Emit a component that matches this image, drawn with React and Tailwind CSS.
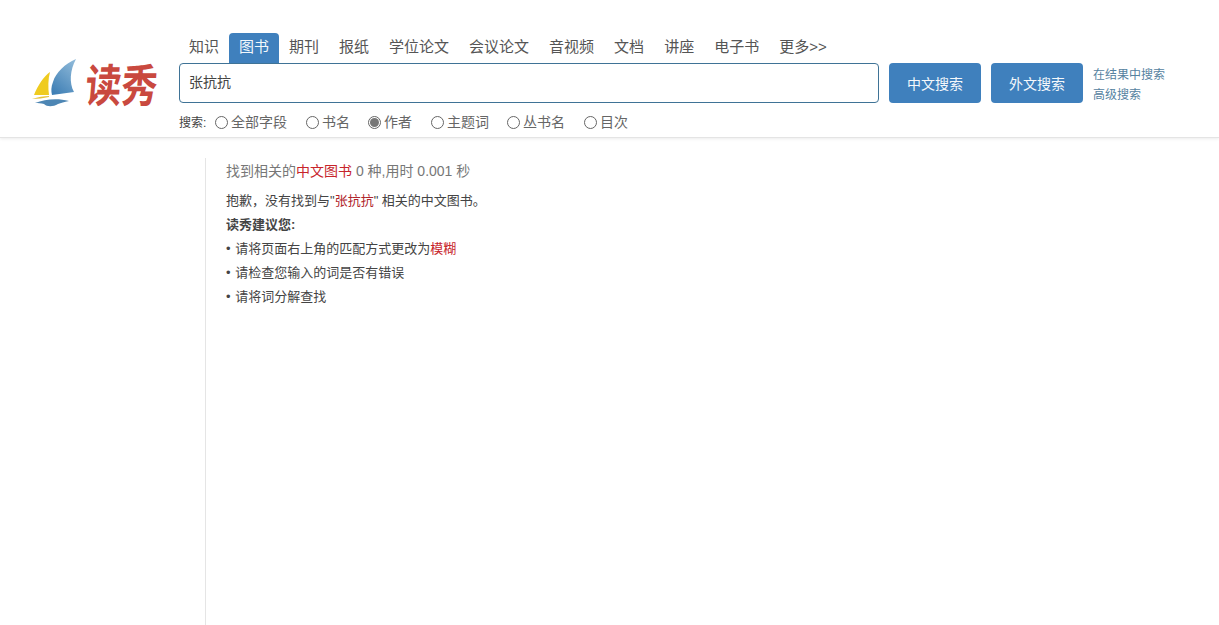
const FONT = { fontFamily: '"Liberation Sans", "Noto Sans CJK SC", sans-serif' };

const tabs = ["知识", "图书", "期刊", "报纸", "学位论文", "会议论文", "音视频", "文档", "讲座", "电子书", "更多>>"];
const radios = [
  ["全部字段", false, "mr-[19px]"],
  ["书名", false, "mr-[18px]"],
  ["作者", true, "mr-[19px]"],
  ["主题词", false, "mr-[18px]"],
  ["丛书名", false, "mr-[19px]"],
  ["目次", false, ""],
];

function Logo() {
  return (
    <div className="w-[179px] shrink-0 pl-[31px] pt-[58px] flex items-start">
      <svg width="50" height="50" viewBox="0 0 50 50" className="shrink-0">
        <defs>
          <linearGradient id="sailBlue" x1="0.8" y1="0" x2="0.2" y2="1">
            <stop offset="0" stopColor="#8db8d8" />
            <stop offset="1" stopColor="#3f7fb5" />
          </linearGradient>
        </defs>
        <path d="M19 14 C13 18 7 27 3 37 L18 37 C17 30 17 21 19 14Z" fill="#efcb1f" />
        <path d="M45 1 C34 6 25 14 22 24 C20 29 20 33 21 37 L43 34 C38 25 39 12 45 1Z" fill="url(#sailBlue)" />
        <path d="M1 41 C7 39 13 38 18 38 L18 39 C12 40 7 41 1 41Z" fill="#e6c23a" />
        <path d="M4 45 C14 41 27 40 38 43 C33 44 30 45 27 46 C22 49 16 49 13 46 C10 45 7 45 4 45Z" fill="#4d86b4" />
      </svg>
      <div
        className="ml-[5px] mt-[-2px] text-[36px] leading-[52px] font-bold text-[#c9493f] whitespace-nowrap -skew-x-6 scale-y-125"
        style={{ fontFamily: '"Noto Sans CJK SC", sans-serif' }}
      >
        读秀
      </div>
    </div>
  );
}

export default function App() {
  return (
    <div className="min-h-[625px] bg-white overflow-hidden" style={FONT}>
      <header className="h-[138px] flex border-b border-[#e4e4e4] shadow-[0_1px_3px_rgba(0,0,0,0.08)]">
        <Logo />
        <div className="pt-[33px] w-[1040px]">
          <nav className="flex h-[30px] text-[15px] text-[#555555]">
            {tabs.map((t) => (
              <div
                key={t}
                className={
                  "px-[10px] leading-[28px] rounded-t-[4px] whitespace-nowrap " +
                  (t === "图书" ? "bg-[#3f80bd] text-[#f2f7fb]" : "")
                }
              >
                {t}
              </div>
            ))}
          </nav>
          <div className="flex items-center h-[40px]">
            <div className="w-[700px] h-[40px] rounded-[4px] border border-[#3f7396] pl-[9px] text-[14px] leading-[37px] text-[#444444]">
              张抗抗
            </div>
            <button className="ml-[10px] w-[92px] h-[40px] pt-[2px] rounded-[4px] bg-[#3f80bd] text-[#f4f8fb] text-[14px]">中文搜索</button>
            <button className="ml-[10px] w-[92px] h-[40px] pt-[2px] rounded-[4px] bg-[#3f80bd] text-[#f4f8fb] text-[14px]">外文搜索</button>
            <div className="ml-[10px] mt-[4px] text-[12px] leading-[20px] text-[#56829f]">
              <div>在结果中搜索</div>
              <div>高级搜索</div>
            </div>
          </div>
          <div className="flex items-center h-[19px] mt-[10px]">
            <span className="text-[12px] text-[#444444] w-[36px]">搜索:</span>
            {radios.map(([label, on, m]) => (
              <div key={label} className={"flex items-center text-[14px] text-[#666666] " + m}>
                <span className="w-[13px] h-[13px] rounded-full border border-[#666666] flex items-center justify-center mr-[3px]">
                  {on && <span className="w-[9px] h-[9px] rounded-full bg-[#777777]" />}
                </span>
                {label}
              </div>
            ))}
          </div>
        </div>
      </header>
      <main className="pl-[205px] pt-[20px]">
        <div className="h-[467px] border-l border-[#e5e5e5] pl-[20px]">
          <div className="text-[14px] leading-[26px] text-[#777777] mb-[5px]">
            找到相关的<span className="text-[#c7242b]">中文图书</span> 0 种,用时 0.001 秒
          </div>
          <div className="text-[13px] leading-[24px] text-[#444444]">
            <div>
              抱歉，没有找到与"<span className="text-[#b0242b]">张抗抗</span>" 相关的中文图书。
            </div>
            <div className="font-bold">读秀建议您:</div>
            <div>• <span className="ml-[1px]">请将页面右上角的匹配方式更改为</span><span className="text-[#c7242b]">模糊</span></div>
            <div>• <span className="ml-[1px]">请检查您输入的词是否有错误</span></div>
            <div>• <span className="ml-[1px]">请将词分解查找</span></div>
          </div>
        </div>
      </main>
    </div>
  );
}
